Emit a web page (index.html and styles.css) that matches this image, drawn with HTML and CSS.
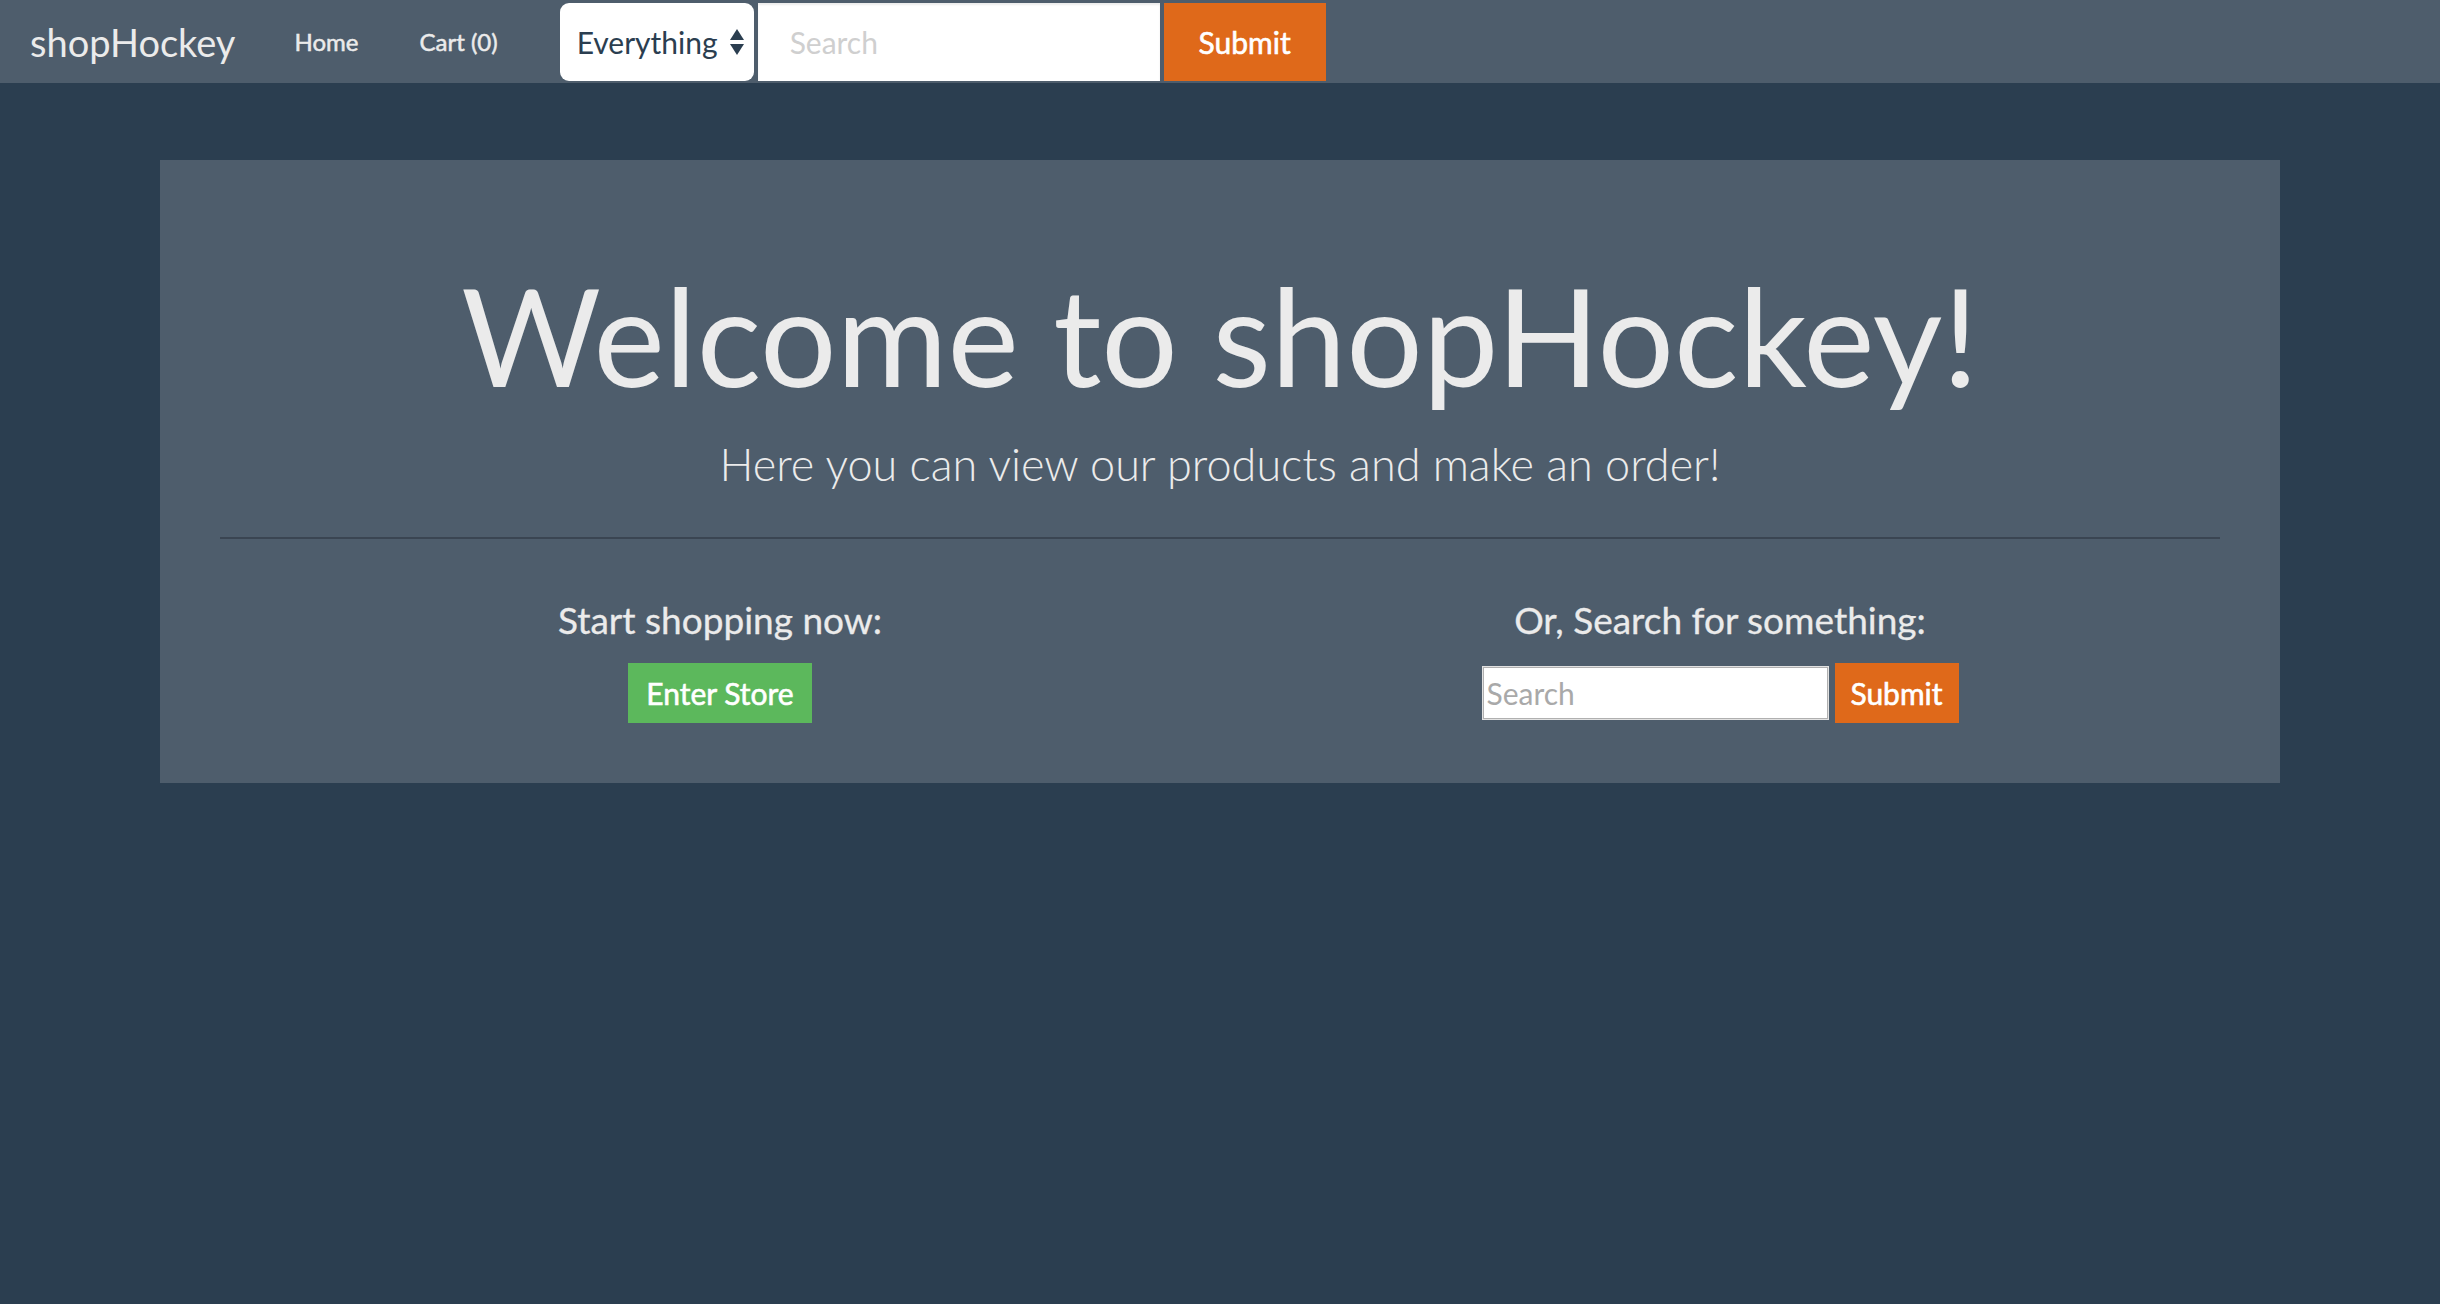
FILE: index.html
```html
<!DOCTYPE html>
<html lang="en">
<head>
<meta charset="utf-8">
<title>shopHockey</title>
<link rel="stylesheet" href="styles.css">
</head>
<body>
<nav class="navbar">
  <a class="brand" href="#">shopHockey</a>
  <ul class="nav-links">
    <li><a href="#">Home</a></li>
    <li><a href="#">Cart (0)</a></li>
  </ul>
  <form class="nav-search">
    <div class="select-wrap">
      <select class="category"><option>Everything</option></select>
      <svg class="select-arrows" width="14" height="26" viewBox="0 0 14 26"><path d="M7 0 L14 11 L0 11 Z" fill="#2b3e50"/><path d="M0 15 L14 15 L7 26 Z" fill="#2b3e50"/></svg>
    </div>
    <input class="nav-input" type="text" placeholder="Search">
    <button class="btn btn-orange nav-submit" type="button">Submit</button>
  </form>
</nav>
<main class="page">
  <section class="jumbotron">
    <h1 class="title">Welcome to shopHockey!</h1>
    <p class="lead">Here you can view our products and make an order!</p>
    <hr class="divider">
    <div class="actions">
      <div class="action-col">
        <h3 class="action-title">Start shopping now:</h3>
        <a class="btn btn-green store-btn" href="#">Enter Store</a>
      </div>
      <div class="action-col">
        <h3 class="action-title">Or, Search for something:</h3>
        <form class="inline-search">
          <input class="plain-input" type="text" placeholder="Search">
          <button class="btn btn-orange inline-submit" type="button">Submit</button>
        </form>
      </div>
    </div>
  </section>
</main>
</body>
</html>
```

FILE: styles.css
```css
* { box-sizing: border-box; }

html, body {
  margin: 0;
  padding: 0;
}

body {
  background: #2b3e50;
  color: #ebebeb;
  font-family: Lato, "Liberation Sans", sans-serif;
  min-height: 1304px;
}

a { text-decoration: none; color: inherit; }

.navbar {
  height: 83px;
  background: #4e5d6c;
  display: flex;
  align-items: center;
  padding-left: 30px;
}

.brand {
  font-size: 38px;
  color: #ebebeb;
  margin-right: 59px;
}

.nav-links {
  list-style: none;
  margin: 0 62px 0 0;
  padding: 0;
  display: flex;
  gap: 61px;
}

.nav-links a {
  font-size: 24px;
  color: #ebebeb;
  -webkit-text-stroke: 0.5px #ebebeb;
}

.nav-search {
  display: flex;
  align-items: center;
  gap: 4px;
  margin: 0;
}

.select-wrap {
  position: relative;
  width: 194px;
  height: 78px;
}

.category {
  appearance: none;
  -webkit-appearance: none;
  width: 100%;
  height: 100%;
  border: none;
  border-radius: 9px;
  background: #fff;
  color: #2b3e50;
  font-family: Lato, "Liberation Sans", sans-serif;
  font-size: 30px;
  padding: 0 0 0 17px;
  margin: 0;
}

.select-arrows {
  position: absolute;
  left: 170px;
  top: 26px;
  pointer-events: none;
}

.nav-input {
  width: 402px;
  height: 78px;
  border: none;
  margin: 0;
  background: #fff;
  box-shadow: inset 0 2px 2px rgba(0,0,0,0.08);
  font-family: Lato, "Liberation Sans", sans-serif;
  font-size: 30px;
  padding: 0 0 0 32px;
  color: #2b3e50;
}

.nav-input::placeholder { color: #cfcfcf; }

.btn {
  display: inline-flex;
  align-items: center;
  justify-content: center;
  border: none;
  color: #fff;
  font-family: Lato, "Liberation Sans", sans-serif;
  font-size: 30px;
  font-weight: 400;
  -webkit-text-stroke: 0.6px #fff;
  margin: 0;
  padding: 0;
}

.btn-orange { background: #df691a; }
.btn-green { background: #5cb85c; }

.nav-submit {
  width: 162px;
  height: 78px;
}

.page {
  padding-top: 77px;
}

.jumbotron {
  width: 2120px;
  margin: 0 auto;
  background: #4e5d6c;
  padding: 108px 60px 60px;
}

.title {
  margin: 0;
  font-size: 135px;
  font-weight: 400;
  line-height: 1;
  text-align: center;
  color: #ebebeb;
}

.lead {
  margin: 39px 0 0;
  font-size: 45px;
  font-weight: 300;
  line-height: 1;
  text-align: center;
}

.divider {
  margin: 50px 0 0;
  border: none;
  border-top: 2px solid #3a4552;
  height: 0;
}

.actions {
  display: grid;
  grid-template-columns: 1fr 1fr;
  margin-top: 62px;
}

.action-col {
  display: flex;
  flex-direction: column;
  align-items: center;
}

.action-title {
  margin: 0 0 25px;
  font-size: 37px;
  font-weight: 400;
  line-height: 1;
  -webkit-text-stroke: 0.3px #ebebeb;
}

.store-btn {
  width: 184px;
  height: 60px;
}

.inline-search {
  display: flex;
  align-items: center;
  gap: 6px;
  margin: 0;
}

.plain-input {
  width: 347px;
  height: 54px;
  margin: 0;
  background: #fff;
  border: 1px solid #e2e2e2;
  box-shadow: inset 0 0 0 1px #b0b0b0;
  font-family: Lato, "Liberation Sans", sans-serif;
  font-size: 30px;
  padding: 0 4px;
}

.plain-input::placeholder { color: #a9a9a9; }

.inline-submit {
  width: 124px;
  height: 60px;
}
```
